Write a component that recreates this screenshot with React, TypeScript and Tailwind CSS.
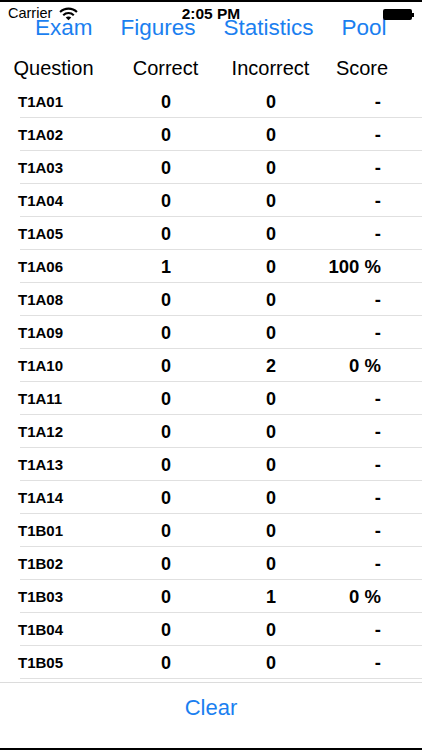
import React from "react";

type Row = { q: string; correct: number; incorrect: number; score: string };

const rows: Row[] = [
  { q: "T1A01", correct: 0, incorrect: 0, score: "-" },
  { q: "T1A02", correct: 0, incorrect: 0, score: "-" },
  { q: "T1A03", correct: 0, incorrect: 0, score: "-" },
  { q: "T1A04", correct: 0, incorrect: 0, score: "-" },
  { q: "T1A05", correct: 0, incorrect: 0, score: "-" },
  { q: "T1A06", correct: 1, incorrect: 0, score: "100 %" },
  { q: "T1A08", correct: 0, incorrect: 0, score: "-" },
  { q: "T1A09", correct: 0, incorrect: 0, score: "-" },
  { q: "T1A10", correct: 0, incorrect: 2, score: "0 %" },
  { q: "T1A11", correct: 0, incorrect: 0, score: "-" },
  { q: "T1A12", correct: 0, incorrect: 0, score: "-" },
  { q: "T1A13", correct: 0, incorrect: 0, score: "-" },
  { q: "T1A14", correct: 0, incorrect: 0, score: "-" },
  { q: "T1B01", correct: 0, incorrect: 0, score: "-" },
  { q: "T1B02", correct: 0, incorrect: 0, score: "-" },
  { q: "T1B03", correct: 0, incorrect: 1, score: "0 %" },
  { q: "T1B04", correct: 0, incorrect: 0, score: "-" },
  { q: "T1B05", correct: 0, incorrect: 0, score: "-" },
];

const tabs = ["Exam", "Figures", "Statistics", "Pool"];

function StatusBar() {
  return (
    <div className="absolute left-0 right-0 top-[2px] h-[20px] text-black pointer-events-none">
      <span className="absolute left-[8px] top-[4px] text-[14.5px] leading-none">Carrier</span>
      {/* wifi */}
      <svg className="absolute left-[59px] top-[5px]" width="19" height="14" viewBox="0 0 18 13">
        <path d="M1 4.6a11.5 11.5 0 0 1 16 0" stroke="black" strokeWidth="2" fill="none" />
        <path d="M4 7.6a7.2 7.2 0 0 1 10 0" stroke="black" strokeWidth="2" fill="none" />
        <path d="M9 12.5 L6.4 9.9 a3.6 3.6 0 0 1 5.2 0 Z" fill="black" />
      </svg>
      <span className="absolute left-0 right-0 top-[4px] text-center text-[15.5px] font-bold leading-none">
        2:05 PM
      </span>
      {/* battery */}
      <div className="absolute left-[383px] top-[7px] flex items-center">
        <div className="w-[29px] h-[11px] bg-black rounded-[2px]" />
        <div className="w-[2px] h-[4px] bg-black" />
      </div>
    </div>
  );
}

export default function App() {
  return (
    <div
      className="relative w-[422px] h-[750px] bg-white overflow-hidden flex flex-col"
      style={{ fontFamily: '"Liberation Sans", Arial, sans-serif' }}
    >
      <div className="h-[2px] bg-black shrink-0" />

      {/* Tabs */}
      <nav className="h-[49px] shrink-0 flex items-center gap-[28px] pl-[35px] pt-[4px] text-[22.5px] text-[#1b7ff0]">
        {tabs.map((t) => (
          <button key={t} className="leading-none">
            {t}
          </button>
        ))}
      </nav>

      {/* Header */}
      <div className="h-[34px] shrink-0 flex items-center text-[20px] text-black">
        <div className="w-[107px] text-center">Question</div>
        <div className="w-[117px] text-center">Correct</div>
        <div className="w-[93px] text-center">Incorrect</div>
        <div className="w-[90px] text-center">Score</div>
      </div>

      {/* Rows */}
      <div className="shrink-0">
        {rows.map((r) => (
          <div key={r.q} className="relative h-[33px] flex items-center pt-px font-bold text-black">
            <div className="w-[116px] pl-[18px] text-[15px]">{r.q}</div>
            <div className="w-[100px] text-center text-[18px]">{r.correct}</div>
            <div className="w-[110px] text-center text-[18px]">{r.incorrect}</div>
            <div className="flex-1 text-right pr-[41px] text-[18.5px]">{r.score}</div>
            <div className="absolute left-[20px] right-0 bottom-0 h-px bg-[#e0e0e0]" />
          </div>
        ))}
      </div>

      {/* Toolbar */}
      <div className="mt-[3px] flex-1 border-t border-[#dcdcdc] flex flex-col">
        <div className="h-[50px] flex items-center justify-center">
          <button className="text-[22px] text-[#1b7ff0] leading-none">Clear</button>
        </div>
        <div className="flex-1" />
        <div className="h-[2px] bg-black" />
      </div>

      <StatusBar />
    </div>
  );
}
